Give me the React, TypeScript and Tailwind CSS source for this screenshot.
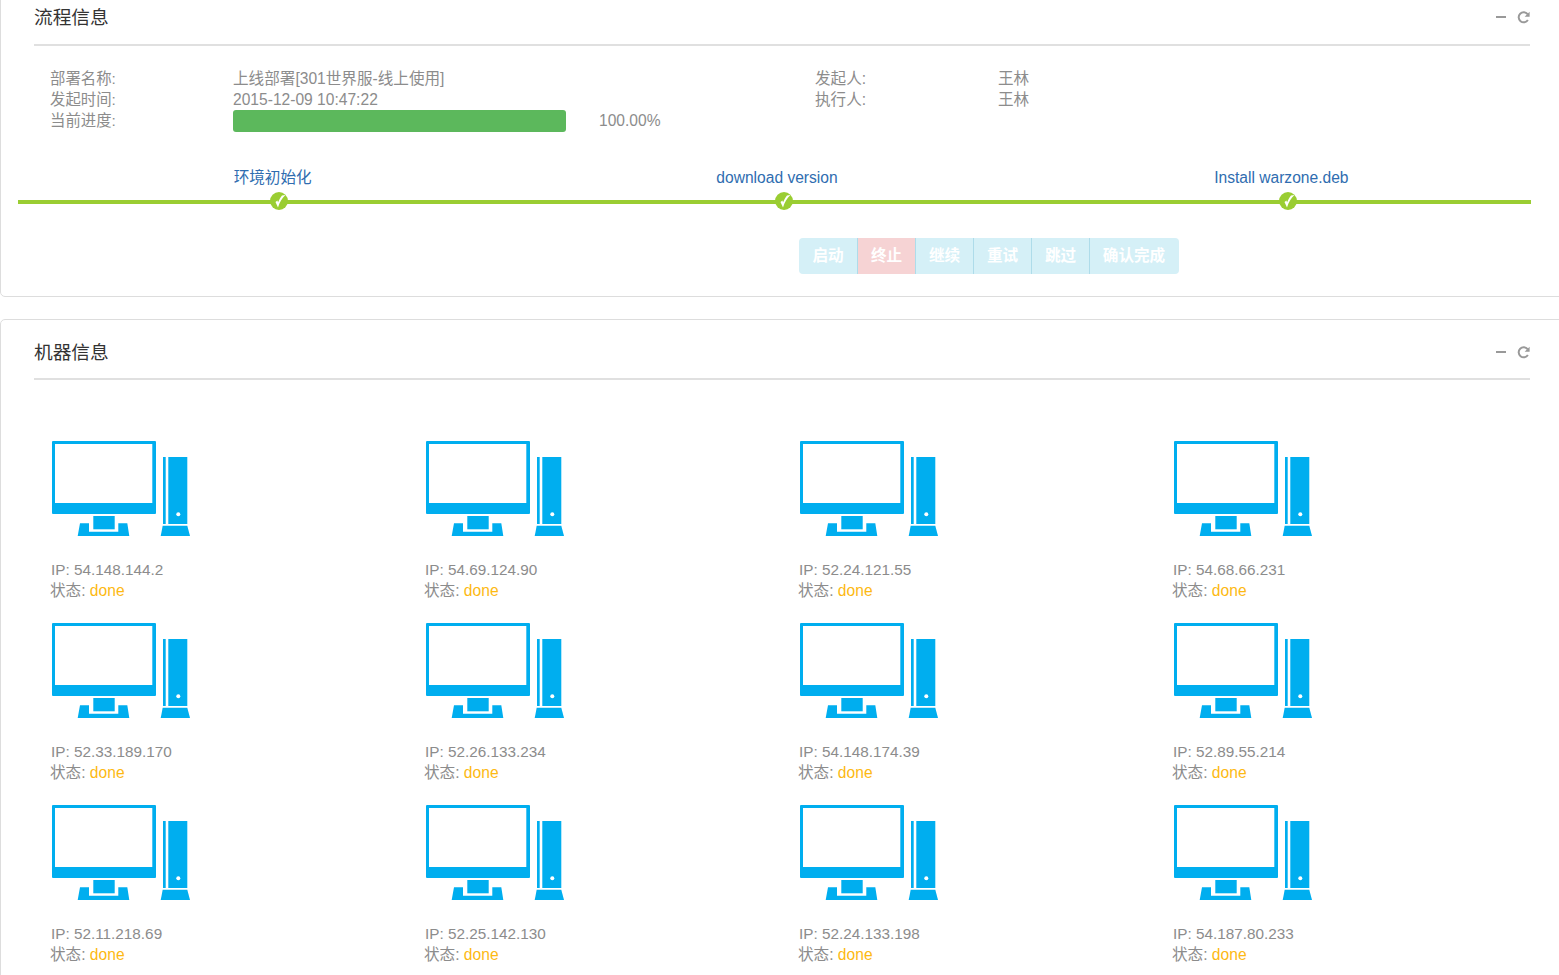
const machines = [
  "54.148.144.2",
  "54.69.124.90",
  "52.24.121.55",
  "54.68.66.231",
  "52.33.189.170",
  "52.26.133.234",
  "54.148.174.39",
  "52.89.55.214",
  "52.11.218.69",
  "52.25.142.130",
  "52.24.133.198",
  "54.187.80.233",
];

const steps = [
  { name: "环境初始化", checkClass: "ml-[18px]" },
  { name: "download version", checkClass: "ml-[20px]" },
  { name: "Install warzone.deb", checkClass: "ml-[18px]" },
];

const actions = [
  { name: "启动", className: "w-[59px] rounded-l-[4px] bg-[#d5f0f7] border-[#aedcea]" },
  { name: "终止", className: "w-[58px] bg-[#f6d3d4] border-[#aedcea]" },
  { name: "继续", className: "w-[58px] bg-[#d5f0f7] border-[#aedcea]" },
  { name: "重试", className: "w-[58px] bg-[#d5f0f7] border-[#aedcea]" },
  { name: "跳过", className: "w-[58px] bg-[#d5f0f7] border-[#aedcea]" },
  { name: "确认完成", className: "w-[89px] rounded-r-[4px] bg-[#d5f0f7] border-transparent" },
];

function Computer() {
  return (
    <svg width="138" height="95" viewBox="0 0 138 95" className="block ml-[1px]">
      <rect x="0" y="0" width="104" height="73" rx="1" fill="#00aeef" />
      <rect x="3" y="3" width="97.3" height="59" fill="#fff" />
      <rect x="41.3" y="75" width="21.4" height="13.3" fill="#00aeef" />
      <path d="M25.7 95 L28 82.3 H37 V90.7 H66.3 V82.3 H75.3 L77.3 95 Z" fill="#00aeef" />
      <rect x="111" y="16" width="2.7" height="67" fill="#00aeef" />
      <rect x="116.3" y="16" width="19" height="67" fill="#00aeef" />
      <circle cx="126.3" cy="73.3" r="2" fill="#fff" />
      <path d="M110.7 84.7 H135.3 L138 95 H108.7 Z" fill="#00aeef" />
    </svg>
  );
}

function Tools() {
  return (
    <div className="flex items-center gap-[11px] mb-[2px]">
      <div className="w-[10px] h-[2px] bg-[#999]"></div>
      <svg width="13" height="13" viewBox="0 0 13 13" className="block">
        <path d="M10.6 3.2 A5 5 0 1 0 10.9 9" fill="none" stroke="#999" strokeWidth="2" />
        <path d="M12.6 0.8 V5.8 H7.6 Z" fill="#999" />
      </svg>
    </div>
  );
}

function CardHeader({ title, className }: { title: string; className: string }) {
  return (
    <div className={`${className} flex items-center justify-between border-b-2 border-[#e0e0e0]`}>
      <h2 className="text-[18.7px] leading-[26px] font-normal text-[#333]">{title}</h2>
      <Tools />
    </div>
  );
}

function Check({ className }: { className: string }) {
  return (
    <svg width="18" height="18" viewBox="0 0 18 18" className={`${className} block relative mt-[4px]`}>
      <circle cx="9" cy="9" r="9" fill="#9acd32" />
      <path d="M5.5 10 L8 15.5 C9.5 10.5 12 6 15.5 3 L12 3.5 C10.5 5.5 9 8 8 10.5 L7.5 8.5 Z" fill="#fff" />
    </svg>
  );
}

export default function App() {
  return (
    <div
      className="w-[1559px] h-[975px] overflow-hidden bg-white text-[15.6px] text-[#8c8c8c]"
      style={{ fontFamily: '"Liberation Sans", "Noto Sans CJK SC", sans-serif' }}
    >
      <section className="w-[1564px] -mt-[15px] h-[312px] border border-[#ddd] rounded-[5px] px-[33px]">
        <CardHeader title="流程信息" className="pt-[19px] pb-[13px]" />

        <div className="pl-[17px] pt-[22px] grid grid-cols-[182px_582px_183px_1fr] leading-[21px]">
          <div className="text-[15.4px] -ml-[1px]">部署名称:</div>
          <div>上线部署[301世界服-线上使用]</div>
          <div>发起人:</div>
          <div>王林</div>
          <div className="text-[15.4px] -ml-[1px]">发起时间:</div>
          <div>2015-12-09 10:47:22</div>
          <div>执行人:</div>
          <div>王林</div>
          <div className="text-[15.4px] -ml-[1px]">当前进度:</div>
          <div className="col-span-3 flex items-start">
            <div className="w-[333px] h-[22px] rounded-[3px] bg-[#5cb85c]"></div>
            <span className="ml-[33px]">100.00%</span>
          </div>
        </div>

        <div className="relative -ml-[16px] w-[1513px] mt-[35px] grid grid-cols-3">
          <div className="absolute left-0 right-0 top-[33px] h-[4px] bg-[#9acd32]"></div>
          {steps.map((step) => (
            <div key={step.name} className="relative flex flex-col items-center">
              <a className="ml-[5px] leading-[21px] text-[#2f6db0]">{step.name}</a>
              <Check className={step.checkClass} />
            </div>
          ))}
        </div>

        <div className="ml-[765px] mt-[28px] flex h-[36px]">
          {actions.map((action) => (
            <button
              key={action.name}
              className={`${action.className} border-r font-bold text-white text-[15.6px] leading-[36px]`}
            >
              {action.name}
            </button>
          ))}
        </div>
      </section>

      <section className="w-[1564px] mt-[22px] border border-[#ddd] rounded-[5px] px-[33px] pb-[40px]">
        <CardHeader title="机器信息" className="pt-[20px] pb-[12px]" />
        <div className="pl-[17px] pt-[61px] grid grid-cols-[repeat(4,374px)] gap-y-[21px]">
          {machines.map((ip) => (
            <div key={ip}>
              <Computer />
              <div className="mt-[23px]">
                <div className="leading-[21px] text-[15.3px]">IP: {ip}</div>
                <div className="leading-[22px] -ml-[1px]">
                  状态: <span className="text-[#fdb913]">done</span>
                </div>
              </div>
            </div>
          ))}
        </div>
      </section>
    </div>
  );
}
